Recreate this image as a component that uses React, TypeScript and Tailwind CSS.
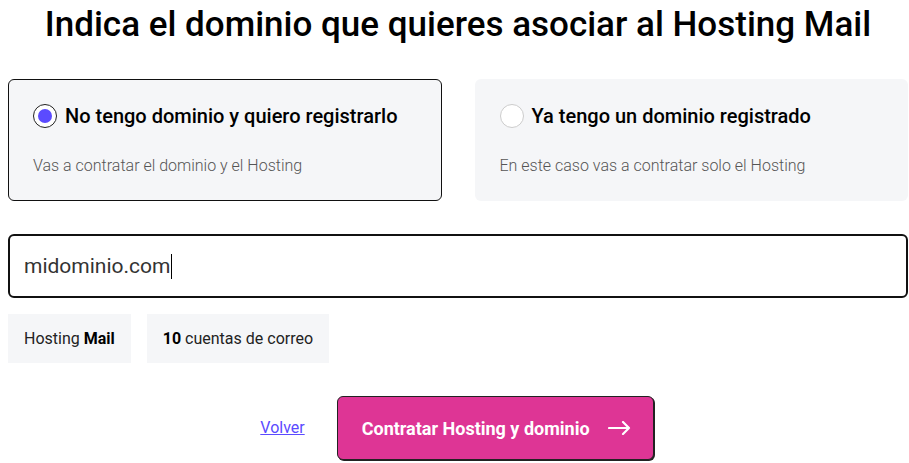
import React from "react";

export default function App() {
  return (
    <div className="min-h-screen bg-white pl-2 pr-px pt-[5px] font-['Roboto',sans-serif] text-[#111]">
      <h1 className="text-center text-[35px] font-medium leading-[40px] text-black">
        Indica el dominio que quieres asociar al Hosting Mail
      </h1>

      <div className="mt-[34px] grid grid-cols-2 gap-[33px]">
        <div className="h-[122px] rounded-md border border-[#111] bg-[#f5f6f8] px-6 pt-6">
          <div className="flex items-center gap-[8px]">
            <span className="flex h-6 w-6 items-center justify-center rounded-full border-[1.5px] border-[#222] bg-white">
              <span className="h-[14px] w-[14px] rounded-full bg-[#5b4bff]" />
            </span>
            <span className="text-[20px] font-medium leading-6 text-black">
              No tengo dominio y quiero registrarlo
            </span>
          </div>
          <p className="mt-[26px] text-[16px] font-light leading-6 text-[#555]">
            Vas a contratar el dominio y el Hosting
          </p>
        </div>
        <div className="h-[122px] rounded-md border border-transparent bg-[#f5f6f8] px-6 pt-6">
          <div className="flex items-center gap-[8px]">
            <span className="h-6 w-6 rounded-full border border-[#ccc] bg-white" />
            <span className="text-[20px] font-medium leading-6 text-black">
              Ya tengo un dominio registrado
            </span>
          </div>
          <p className="mt-[26px] text-[16px] font-light leading-6 text-[#555]">
            En este caso vas a contratar solo el Hosting
          </p>
        </div>
      </div>

      <div className="mt-[33px] flex h-16 items-center rounded-md border-2 border-[#111] bg-white pl-[14px]">
        <span className="text-[21px] leading-6 text-[#333]">midominio.com</span>
        <span className="ml-[1px] h-[25px] w-[1px] bg-black" />
      </div>

      <div className="mt-4 flex gap-4">
        <div className="flex h-[49px] items-center bg-[#f5f6f8] px-4 text-[16px] text-[#222]">
          Hosting&nbsp;<b className="font-bold text-black">Mail</b>
        </div>
        <div className="flex h-[49px] items-center bg-[#f5f6f8] px-4 text-[16px] text-[#222]">
          <b className="font-bold text-black">10</b>&nbsp;cuentas de correo
        </div>
      </div>

      <div className="mt-[33px] flex items-center justify-center gap-8 pr-[2px]">
        <a href="#" className="text-[16px] text-[#5b4bff] underline">
          Volver
        </a>
        <button className="flex h-16 w-[317px] items-center rounded-md border border-[#222] bg-[#de3595] pl-6 text-[18px] font-bold text-white shadow-[1px_1px_0_#222]">
          Contratar Hosting y dominio
          <svg className="ml-[18px]" width="23" height="14" viewBox="0 0 23 14" fill="none">
            <path d="M1 7h20M15 1l6 6-6 6" stroke="white" strokeWidth="2.2" strokeLinecap="round" strokeLinejoin="round" />
          </svg>
        </button>
      </div>
    </div>
  );
}
